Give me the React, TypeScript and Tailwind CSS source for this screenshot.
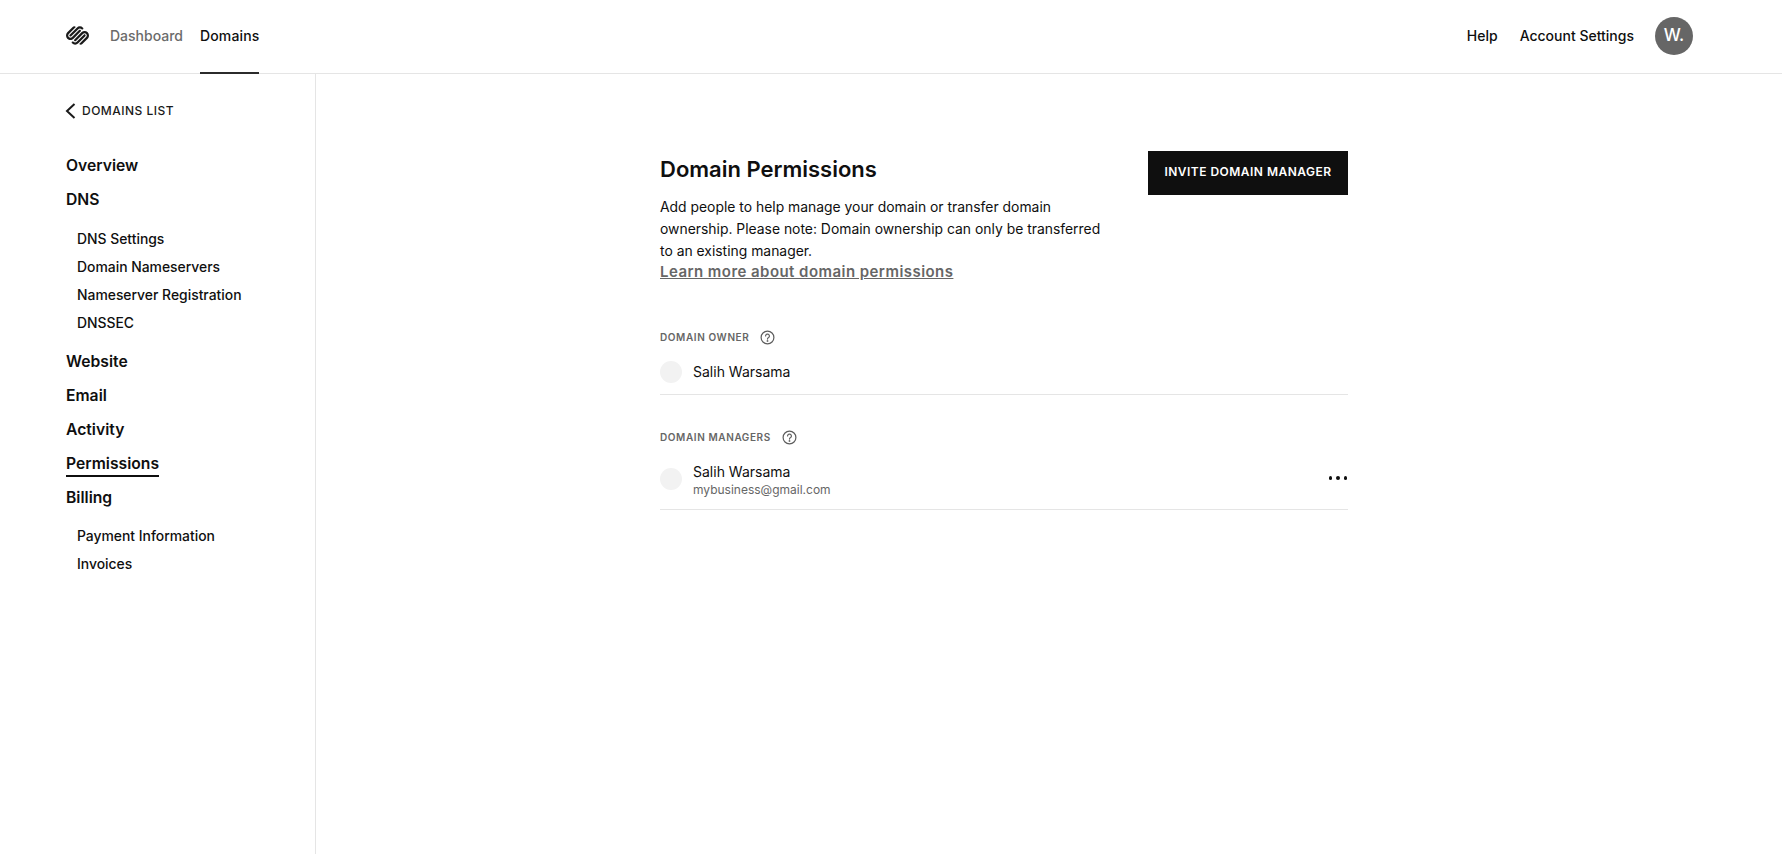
import { SiSquarespace } from "react-icons/si";

const HelpIcon = () => (
  <svg width="15" height="15" viewBox="0 0 15 15" fill="none" stroke="#5c5c5c" strokeWidth="1.2" strokeLinecap="round">
    <circle cx="7.500" cy="7.500" r="6.400" />
    <path d="M5.600 6a1.900 1.900 0 1 1 2.900 1.600c-.7.400-1 .8-1 1.500" />
    <circle cx="7.500" cy="11" r="0.300" />
  </svg>
);

const mainLink = "h-[34px] flex items-center text-[15.7px] font-semibold text-[#0f0f0f]";
const subLink = "h-7 flex items-center pl-[11px] text-[13.9px] font-medium text-[#0f0f0f]";

const Sidebar = () => (
  <aside className="w-[316px] shrink-0 border-r border-[#e5e5e5] pl-[65px] pt-[27px]">
    <div className="flex h-[20px] items-center gap-[6px]">
      <svg width="11" height="16" viewBox="0 0 11 16" fill="none" stroke="#1a1a1a" strokeWidth="2">
        <path d="M9.500 1 2 8l7.500 7" />
      </svg>
      <span className="text-xs font-medium tracking-[0.04em] text-[#1a1a1a]">DOMAINS LIST</span>
    </div>
    <nav className="ml-[1px] mt-[28px]">
      <div className={mainLink}>Overview</div>
      <div className={mainLink}>DNS</div>
      <div className="mb-[8px] mt-[8px]">
        <div className={subLink}>DNS Settings</div>
        <div className={subLink}>Domain Nameservers</div>
        <div className={subLink}>Nameserver Registration</div>
        <div className={subLink}>DNSSEC</div>
      </div>
      <div className={mainLink}>Website</div>
      <div className={mainLink}>Email</div>
      <div className={mainLink}>Activity</div>
      <div className={mainLink}>
        <span className="relative">
          Permissions
          <span className="absolute inset-x-0 bottom-[-1px] h-[2px] bg-[#0f0f0f]" />
        </span>
      </div>
      <div className={mainLink}>Billing</div>
      <div className="mt-[7px]">
        <div className={subLink}>Payment Information</div>
        <div className={subLink}>Invoices</div>
      </div>
    </nav>
  </aside>
);

const SectionLabel = ({ text }: { text: string }) => (
  <div className="flex h-4 items-center gap-[11px]">
    <span className="text-[10px] font-semibold tracking-[0.06em] text-[#666666]">{text}</span>
    <HelpIcon />
  </div>
);

export default function App() {
  return (
    <div className="flex h-[854px] flex-col overflow-hidden bg-white font-['Inter',sans-serif]">
      <header className="flex h-[74px] shrink-0 items-stretch border-b border-[#e5e5e5] pb-[2px] pl-[66px] pr-[89px]">
        <div className="flex items-center">
          <SiSquarespace size={23} color="#1a1a1a" />
        </div>
        <div className="ml-[21px] flex items-center text-sm font-medium text-[#6b6b6b]">Dashboard</div>
        <div className="relative ml-[17px] flex items-center text-sm font-medium tracking-[0.01em] text-[#0f0f0f]">
          Domains
          <span className="absolute inset-x-0 bottom-[-3px] h-[2px] bg-[#2b2b2b]" />
        </div>
        <div className="ml-auto flex items-center text-sm font-medium text-[#0f0f0f]">
          <span>Help</span>
          <span className="ml-[22px]">Account Settings</span>
          <div className="ml-[21px] flex h-[38px] w-[38px] items-center justify-center rounded-full bg-[#666666] text-[17px] font-medium text-white">
            W.
          </div>
        </div>
      </header>
      <div className="flex min-h-0 flex-1">
        <Sidebar />
        <main className="flex-1 pl-[344px] pt-[77px]">
          <div className="w-[688px]">
            <div className="flex items-start justify-between">
              <div className="w-[450px]">
                <h1 className="text-[22px] font-semibold leading-[36px] text-[#0f0f0f]">Domain Permissions</h1>
                <p className="mt-[9px] text-[13.9px] leading-[22px] text-[#0f0f0f]">
                  Add people to help manage your domain or transfer domain ownership. Please note: Domain ownership can
                  only be transferred to an existing manager.
                </p>
                <a className="block text-[15px] font-semibold leading-[20px] tracking-[0.03em] text-[#666666] underline">
                  Learn more about domain permissions
                </a>
              </div>
              <button className="h-11 w-[200px] bg-[#0f0f0f] pb-[2px] text-xs font-semibold tracking-[0.04em] text-white">
                INVITE DOMAIN MANAGER
              </button>
            </div>
            <section className="mt-[47px]">
              <SectionLabel text="DOMAIN OWNER" />
              <div className="mt-[16px] flex h-[34px] items-start gap-[11px] border-b border-[#e5e5e5]">
                <div className="h-[22px] w-[22px] rounded-full bg-[#f2f2f2]" />
                <span className="text-sm leading-[22px] text-[#0f0f0f]">Salih Warsama</span>
              </div>
            </section>
            <section className="mt-[34px]">
              <SectionLabel text="DOMAIN MANAGERS" />
              <div className="mt-[16px] flex h-[49px] items-start border-b border-[#e5e5e5]">
                <div className="mt-[7px] h-[22px] w-[22px] rounded-full bg-[#f2f2f2]" />
                <div className="ml-[11px] pt-[1px]">
                  <div className="text-sm leading-[20px] text-[#0f0f0f]">Salih Warsama</div>
                  <div className="-mt-[1px] text-xs leading-[17px] text-[#666666]">mybusiness@gmail.com</div>
                </div>
                <div className="ml-auto mr-[1px] mt-[15px] flex gap-[4px]">
                  <span className="h-[3.5px] w-[3.5px] rounded-full bg-[#0f0f0f]" />
                  <span className="h-[3.5px] w-[3.5px] rounded-full bg-[#0f0f0f]" />
                  <span className="h-[3.5px] w-[3.5px] rounded-full bg-[#0f0f0f]" />
                </div>
              </div>
            </section>
          </div>
        </main>
      </div>
    </div>
  );
}
